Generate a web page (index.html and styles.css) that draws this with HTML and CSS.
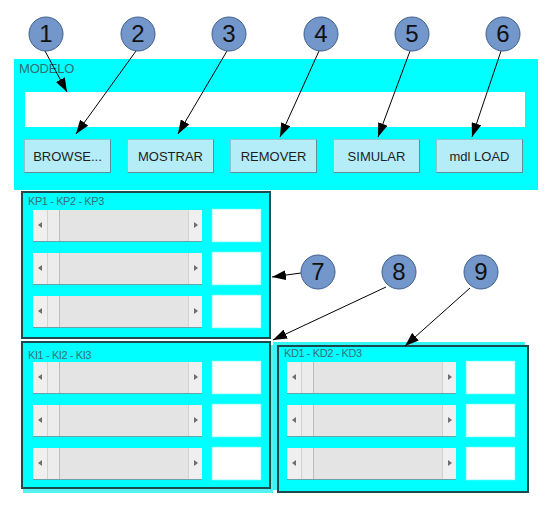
FILE: index.html
```html
<!DOCTYPE html>
<html lang="es">
<head>
    <meta charset="UTF-8">
    <title>PID - Modelo</title>
    <link rel="stylesheet" href="styles.css">
</head>
<body>
    <div class="page">
        <div class="modelo">
            <div class="modelo-label">MODELO</div>
            <div class="modelo-input"></div>
            <div class="modelo-buttons">
                <button class="btn">BROWSE...</button>
                <button class="btn">MOSTRAR</button>
                <button class="btn">REMOVER</button>
                <button class="btn">SIMULAR</button>
                <button class="btn">mdl LOAD</button>
            </div>
        </div>

        <div class="gains">
            <div class="panel panel-kp">
                <div class="panel-label">KP1 - KP2 - KP3</div>
                <div class="rows">
                    <div class="row"><div class="slider"><span class="arrow arrow-left"></span><span class="thumb"></span><span class="track"></span><span class="arrow arrow-right"></span></div><div class="value"></div></div>
                    <div class="row"><div class="slider"><span class="arrow arrow-left"></span><span class="thumb"></span><span class="track"></span><span class="arrow arrow-right"></span></div><div class="value"></div></div>
                    <div class="row"><div class="slider"><span class="arrow arrow-left"></span><span class="thumb"></span><span class="track"></span><span class="arrow arrow-right"></span></div><div class="value"></div></div>
                </div>
            </div>

            <div class="panel panel-ki">
                <div class="panel-label">KI1 - KI2 - KI3</div>
                <div class="rows">
                    <div class="row"><div class="slider"><span class="arrow arrow-left"></span><span class="thumb"></span><span class="track"></span><span class="arrow arrow-right"></span></div><div class="value"></div></div>
                    <div class="row"><div class="slider"><span class="arrow arrow-left"></span><span class="thumb"></span><span class="track"></span><span class="arrow arrow-right"></span></div><div class="value"></div></div>
                    <div class="row"><div class="slider"><span class="arrow arrow-left"></span><span class="thumb"></span><span class="track"></span><span class="arrow arrow-right"></span></div><div class="value"></div></div>
                </div>
            </div>

            <div class="panel panel-kd">
                <div class="panel-label">KD1 - KD2 - KD3</div>
                <div class="rows">
                    <div class="row"><div class="slider"><span class="arrow arrow-left"></span><span class="thumb"></span><span class="track"></span><span class="arrow arrow-right"></span></div><div class="value"></div></div>
                    <div class="row"><div class="slider"><span class="arrow arrow-left"></span><span class="thumb"></span><span class="track"></span><span class="arrow arrow-right"></span></div><div class="value"></div></div>
                    <div class="row"><div class="slider"><span class="arrow arrow-left"></span><span class="thumb"></span><span class="track"></span><span class="arrow arrow-right"></span></div><div class="value"></div></div>
                </div>
            </div>
        </div>

        <!-- numbered callouts drawn over the form -->
        <svg class="callouts" width="557" height="521" viewBox="0 0 557 521">
            <defs>
                <marker id="head" markerWidth="14" markerHeight="10" refX="14" refY="5" orient="auto" markerUnits="userSpaceOnUse">
                    <path d="M0,0 L14,5 L0,10 Z" fill="#000"/>
                </marker>
            </defs>
            <g stroke="#000" stroke-width="1" marker-end="url(#head)">
                <line x1="45" y1="51" x2="67" y2="92"/>
                <line x1="136" y1="51" x2="76" y2="134"/>
                <line x1="227" y1="51" x2="178" y2="134"/>
                <line x1="319" y1="51" x2="280" y2="137"/>
                <line x1="410" y1="51" x2="378" y2="137"/>
                <line x1="501" y1="51" x2="472" y2="137"/>
                <line x1="301" y1="273" x2="272" y2="277"/>
                <line x1="386" y1="287" x2="273" y2="340"/>
                <line x1="470" y1="288" x2="405" y2="346"/>
            </g>
            <g class="dots">
                <circle cx="46" cy="34" r="17"/>
                <circle cx="138" cy="34" r="17"/>
                <circle cx="229" cy="34" r="17"/>
                <circle cx="321" cy="34" r="17"/>
                <circle cx="412" cy="34" r="17"/>
                <circle cx="503" cy="34" r="17"/>
                <circle cx="318" cy="272" r="17"/>
                <circle cx="399" cy="272" r="17"/>
                <circle cx="481" cy="272" r="17"/>
            </g>
            <g class="nums" text-anchor="middle">
                <text x="46" y="42">1</text>
                <text x="138" y="42">2</text>
                <text x="229" y="42">3</text>
                <text x="321" y="42">4</text>
                <text x="412" y="42">5</text>
                <text x="503" y="42">6</text>
                <text x="318" y="280">7</text>
                <text x="399" y="280">8</text>
                <text x="481" y="280">9</text>
            </g>
        </svg>
    </div>
</body>
</html>
```

FILE: styles.css
```css
* {
    margin: 0;
    padding: 0;
    box-sizing: border-box;
}

body {
    font-family: 'Liberation Sans', Arial, sans-serif;
    background: white;
}

.page {
    position: relative;
    width: 557px;
    height: 521px;
    padding: 59px 0 0 14px;
}

/* top block */
.modelo {
    width: 524px;
    height: 131px;
    background: #00ffff;
    padding: 2px 0 0 10px;
}

.modelo-label {
    font-size: 13px;
    line-height: 14px;
    color: #2f6f74;
    margin-left: -5px;
    margin-top: 1px;
    letter-spacing: -0.2px;
}

.modelo-input {
    width: 500px;
    height: 35px;
    margin: 16px 0 0 1px;
    background: white;
}

.modelo-buttons {
    display: flex;
    gap: 16px;
    margin-top: 12px;
}

.btn {
    width: 87px;
    height: 34px;
    background: #b4edf7;
    border: 1px solid #8cc6cf;
    border-right-color: #5c8f96;
    border-bottom-color: #5c8f96;
    font-family: inherit;
    font-size: 13px;
    color: #1e1e1e;
}

/* gain panels */
.gains {
    display: grid;
    grid-template-columns: 250px 252px;
    column-gap: 6px;
    margin: 1px 0 0 7px;
}

.panel {
    height: 148px;
    background: #00ffff;
    border: 2px solid #1b4b4e;
    padding: 2px 0 0 5px;
}

.panel-kp {
    grid-column: 1;
    grid-row: 1;
}

.panel-ki {
    grid-column: 1;
    grid-row: 2;
    margin-top: 2px;
    padding-top: 6px;
    box-shadow: 2px 4px 0 #55f2f2;
}

.panel-kd {
    grid-column: 2;
    grid-row: 2;
    margin-top: 6px;
    padding-top: 0;
    box-shadow: -4px -3px 0 #33f6f6;
}

.panel-label {
    font-size: 11px;
    line-height: 13px;
    color: #3c6e73;
    letter-spacing: -0.4px;
}

.rows {
    display: flex;
    flex-direction: column;
    gap: 11px;
    margin: 2px 0 0 5px;
}

.panel-ki .rows {
    margin-top: 0;
}

.panel-kd .rows {
    margin: 2px 0 0 3px;
}

.row {
    display: flex;
    gap: 11px;
    height: 32px;
}

.slider {
    display: flex;
    width: 169px;
    height: 32px;
    border-bottom: 1px solid #6aa2a8;
    background: #e6e6e6;
}

.arrow {
    position: relative;
    width: 15px;
    background: #efefef;
    border-right: 1px solid #d2d2d2;
}

.arrow-right {
    width: 14px;
    border-right: none;
    border-left: 1px solid #d2d2d2;
}

.arrow::after {
    content: '';
    position: absolute;
    top: 12px;
    left: 5px;
    border: 3px solid transparent;
}

.arrow-left::after {
    border-right: 4px solid #6e6e6e;
    left: 2px;
}

.arrow-right::after {
    border-left: 4px solid #6e6e6e;
    left: 5px;
}

.thumb {
    width: 12px;
    background: #ececec;
    border-right: 1px solid #bdbdbd;
}

.track {
    flex: 1;
    background: #e4e4e4;
}

.value {
    width: 47px;
    height: 31px;
    background: white;
    box-shadow: 0 0 1px 1px #c8ffff;
}

/* callouts */
.callouts {
    position: absolute;
    top: 0;
    left: 0;
}

.dots circle {
    fill: #7397cb;
    stroke: #3f5f8c;
    stroke-width: 1;
}

.nums text {
    font-family: 'Liberation Sans', Arial, sans-serif;
    font-size: 24px;
    fill: #111;
}
```
